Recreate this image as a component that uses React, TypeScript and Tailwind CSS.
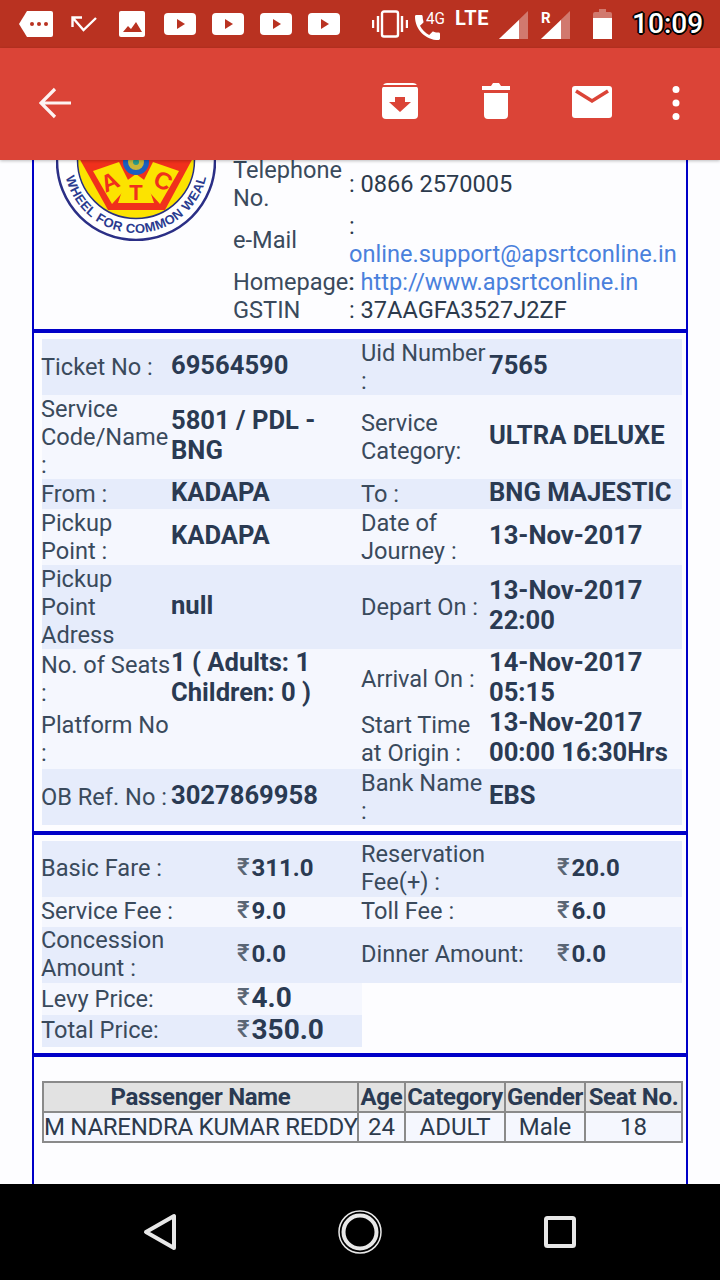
const labelText = "text-[23.6px] leading-[28px] text-[#3a4a5c] whitespace-pre";
const valueText = "text-[25.6px] leading-[30px] font-bold text-[#2a3a52] whitespace-pre";

type Row = { a: string; b: string; c: string; d: string; h: string; bg: string };

const ticketRows: Row[] = [
  { a: "Ticket No :", b: "69564590", c: "Uid Number\n:", d: "7565", h: "h-[56px]", bg: "bg-[#e6ecfb]" },
  { a: "Service\nCode/Name\n:", b: "5801 / PDL -\nBNG", c: "Service\nCategory:", d: "ULTRA DELUXE", h: "h-[84px]", bg: "bg-[#f5f7fe]" },
  { a: "From :", b: "KADAPA", c: "To :", d: "BNG MAJESTIC", h: "h-[30px]", bg: "bg-[#e6ecfb]" },
  { a: "Pickup\nPoint :", b: "KADAPA", c: "Date of\nJourney :", d: "13-Nov-2017", h: "h-[56px]", bg: "bg-[#f5f7fe]" },
  { a: "Pickup\nPoint\nAdress", b: "null", c: "Depart On :", d: "13-Nov-2017\n22:00", h: "h-[84px]", bg: "bg-[#e6ecfb]" },
  { a: "No. of Seats\n:", b: "1 ( Adults: 1\nChildren: 0 )", c: "Arrival On :", d: "14-Nov-2017\n05:15", h: "h-[60px]", bg: "bg-[#f5f7fe]" },
  { a: "Platform No\n:", b: "", c: "Start Time\nat Origin :", d: "13-Nov-2017\n00:00 16:30Hrs", h: "h-[60px]", bg: "bg-[#f5f7fe]" },
  { a: "OB Ref. No :", b: "3027869958", c: "Bank Name\n:", d: "EBS", h: "h-[56px]", bg: "bg-[#e6ecfb]" },
];

const fareRows = [
  { a: "Basic Fare :", b: "311.0", c: "Reservation\nFee(+) :", d: "20.0", h: "h-[56px]", bg: "bg-[#e6ecfb]" },
  { a: "Service Fee :", b: "9.0", c: "Toll Fee :", d: "6.0", h: "h-[30px]", bg: "bg-[#f5f7fe]" },
  { a: "Concession\nAmount :", b: "0.0", c: "Dinner Amount:", d: "0.0", h: "h-[56px]", bg: "bg-[#e6ecfb]" },
];

function Cell({ text, kind, lift }: { text: string; kind: "label" | "value"; lift?: boolean }) {
  return (
    <div className={`flex items-center ${kind === "label" ? `-ml-[1px] ${labelText}` : valueText}`}>
      <span className={kind === "value" ? "relative -top-[2px]" : lift ? "relative -top-[1px]" : ""}>{text}</span>
    </div>
  );
}

function Money({ value, big }: { value: string; big?: boolean }) {
  return (
    <div className="flex items-center whitespace-nowrap">
      <span className="text-[24px] leading-[30px] font-medium text-[#5a6675] mr-[2px] relative -top-[2px]">₹</span>
      <span className={`${big ? "text-[28px]" : "text-[24px]"} leading-[30px] font-bold text-[#2a3a52] relative -top-[1px]`}>{value}</span>
    </div>
  );
}

function PlayIcon() {
  return (
    <svg width="32" height="22" viewBox="0 0 32 22">
      <rect width="32" height="22" rx="4" fill="#fff" />
      <path d="M13 6l8 5-8 5z" fill="#b93221" />
    </svg>
  );
}

function StatusBar() {
  return (
    <div className="relative flex h-[48px] shrink-0 items-center bg-[#b93221] pl-[19px] text-white">
      <svg width="34" height="26" viewBox="0 0 34 26">
        <path d="M8 0h24a2 2 0 0 1 2 2v22a2 2 0 0 1-2 2H8L0 13z" fill="#fff" />
        <circle cx="13" cy="13" r="2" fill="#b93221" />
        <circle cx="20" cy="13" r="2" fill="#b93221" />
        <circle cx="27" cy="13" r="2" fill="#b93221" />
      </svg>
      <svg className="ml-[18px]" width="26" height="16" viewBox="0 0 26 16">
        <path d="M1.500 11V1.500H11M2 2l10.500 12L25 2" fill="none" stroke="#fff" strokeWidth="2.400" />
      </svg>
      <svg className="ml-[22px]" width="26" height="26" viewBox="0 0 26 26">
        <rect width="26" height="26" rx="2" fill="#fff" />
        <path d="M4 21l5-6 3 3 5-7 6 10z" fill="#b93221" />
      </svg>
      <div className="ml-[19px] flex gap-[16px]">
        <PlayIcon />
        <PlayIcon />
        <PlayIcon />
        <PlayIcon />
      </div>
      <svg className="ml-[32px]" width="36" height="28" viewBox="0 0 36 28">
        <rect x="10" y="1.500" width="16" height="25" rx="2" fill="none" stroke="#fff" strokeWidth="2.400" />
        <path d="M1 10v8M6 6v16M30 6v16M35 10v8" stroke="#fff" strokeWidth="2.400" />
      </svg>
      <div className="relative ml-[7px] h-[30px] w-[33px] self-start mt-[10px]">
        <svg className="absolute left-0 top-[5px]" width="25" height="25" viewBox="3 3 18 18">
          <path
            d="M6.600 10.800c1.400 2.800 3.800 5.100 6.600 6.600l2.200-2.200c.3-.3.700-.4 1-.2 1.100.4 2.300.6 3.600.6.600 0 1 .4 1 1V20c0 .6-.4 1-1 1C10.600 21 3 13.400 3 4c0-.6.4-1 1-1h3.500c.6 0 1 .4 1 1 0 1.300.2 2.500.6 3.600.1.300 0 .7-.2 1z"
            fill="#fff"
          />
        </svg>
        <span className="absolute left-[11px] -top-[2px] text-[17px] leading-[20px] text-white scale-x-90 origin-left">4G</span>
      </div>
      <span className="ml-[7px] text-[20px] leading-[20px] font-bold tracking-[0.6px] self-start mt-[8px]">LTE</span>
      <svg className="ml-[10px] mt-[2px]" width="29" height="28" viewBox="0 0 29 28">
        <path d="M0 28L29 0v28z" fill="#fff" fillOpacity="0.35" />
        <path d="M0 28L20 9v19z" fill="#fff" />
      </svg>
      <div className="relative ml-[13px] mt-[2px] h-[28px] w-[29px]">
        <svg width="29" height="28" viewBox="0 0 29 28">
          <path d="M0 28L29 0v28z" fill="#fff" fillOpacity="0.35" />
          <path d="M0 28L20 9v19z" fill="#fff" />
        </svg>
        <span className="absolute left-0 -top-[1px] text-[15px] leading-[16px] font-bold text-white">R</span>
      </div>
      <svg className="ml-[23px]" width="19" height="30" viewBox="0 0 19 30">
        <path d="M6 0h7v3h4a2 2 0 0 1 2 2v25H0V5a2 2 0 0 1 2-2h4z" fill="#fff" fillOpacity="0.35" />
        <path d="M0 9h19v21H0z" fill="#fff" />
      </svg>
      <span className="ml-[20px] text-[28px] leading-[32px] font-medium text-white [text-shadow:-1px_-1px_0_#000,1px_-1px_0_#000,-1px_1px_0_#000,1px_1px_0_#000,0_2px_0_#000,2px_0_0_#000,-2px_0_0_#000,0_-2px_0_#000]">
        10:09
      </span>
    </div>
  );
}

function Toolbar() {
  return (
    <div className="relative z-10 flex h-[112px] shrink-0 items-center bg-[#db4437] shadow-[0_1px_3px_rgba(0,0,0,0.25)]">
      <svg className="ml-[39px] -mt-[2px]" width="32" height="32" viewBox="0 0 32 32">
        <path d="M32 16H3M16 2L2 16l14 14" fill="none" stroke="#fdf3f2" strokeWidth="3.200" />
      </svg>
      <svg className="ml-[311px] -mt-[6px]" width="36" height="36" viewBox="0 0 36 36">
        <path d="M5 0h26a5 5 0 0 1 4 2H1a5 5 0 0 1 4-2z" fill="#fff" />
        <path d="M0 5.500a3 3 0 0 1 1-1.500h34a3 3 0 0 1 1 1.500V32a4 4 0 0 1-4 4H4a4 4 0 0 1-4-4z" fill="#fff" />
        <path d="M13 14h10v5h6L18 29 7 19h6z" fill="#db4437" />
      </svg>
      <svg className="ml-[64px] -mt-[6px]" width="28" height="36" viewBox="0 0 28 36">
        <path d="M0 3h9l2-3h6l2 3h9v4H0zM2 10h24v22a4 4 0 0 1-4 4H6a4 4 0 0 1-4-4z" fill="#fff" />
      </svg>
      <svg className="ml-[62px] -mt-[4px]" width="40" height="32" viewBox="0 0 40 32">
        <rect width="40" height="32" rx="3" fill="#fff" />
        <path d="M4 5l16 10L36 5" fill="none" stroke="#db4437" strokeWidth="3.600" />
      </svg>
      <svg className="ml-[60px] -mt-[2px]" width="8" height="34" viewBox="0 0 8 34">
        <circle cx="4" cy="3.500" r="3.500" fill="#fff" />
        <circle cx="4" cy="17" r="3.500" fill="#fff" />
        <circle cx="4" cy="30.500" r="3.500" fill="#fff" />
      </svg>
    </div>
  );
}

function Logo() {
  return (
    <svg width="160" height="85" viewBox="56 156 160 85" className="block">
      <defs>
        <path id="logo-band" d="M64 161 A72 72 0 0 0 208 161" />
      </defs>
      <circle cx="136" cy="161" r="79" fill="#fff" stroke="#2b2f86" strokeWidth="2.500" />
      <circle cx="136" cy="160" r="58.500" fill="#fce300" stroke="#27307f" strokeWidth="1.500" />
      {/* red star frame */}
      <path d="M78 156H194L165 210H108Z" fill="#f0301c" />
      <path d="M93 171L119 162L130 184L112 204Z" fill="#fce300" />
      <path d="M179 171L153 162L142 184L160 204Z" fill="#fce300" />
      <path d="M136 174L147 182L154 203H118L125 182Z" fill="#fce300" />
      <circle cx="136" cy="162" r="10.500" fill="#c9b53a" stroke="#1b5fc0" strokeWidth="5" />
      <circle cx="136" cy="162" r="3" fill="#2a9a8a" />
      <text x="110" y="190" fontSize="24" fontWeight="700" fill="#f0301c" fontFamily="'Liberation Sans',sans-serif" textAnchor="middle" transform="rotate(-25 110 182)">A</text>
      <text x="136" y="200" fontSize="22" fontWeight="700" fill="#f0301c" fontFamily="'Liberation Sans',sans-serif" textAnchor="middle">T</text>
      <text x="163" y="189" fontSize="24" fontWeight="700" fill="#f0301c" fontFamily="'Liberation Sans',sans-serif" textAnchor="middle" transform="rotate(25 163 181)">C</text>
      <text fontSize="13" fontWeight="700" fill="#2a3b8f" fontFamily="'Liberation Sans',sans-serif" textAnchor="middle" textLength="193">
        <textPath href="#logo-band" startOffset="50%">WHEEL FOR COMMON WEAL</textPath>
      </text>
    </svg>
  );
}

function HeaderBlock() {
  const rowLabel = "flex items-center text-[23.6px] leading-[28px] text-[#3a4a5c]";
  const rowValue = "flex flex-col justify-center text-[23.6px] leading-[28px] text-[#2c3a4c] whitespace-nowrap";
  return (
    <div className="-mt-[4px] flex h-[173px] pl-[22px] pt-0">
      <div className="w-[177px] shrink-0">
        <Logo />
      </div>
      <div className="grid grid-cols-[116px_1fr] grid-rows-[56px_56px_28px_28px]">
        <div className={rowLabel}>Telephone<br />No.</div>
        <div className={rowValue}>: 0866 2570005</div>
        <div className={rowLabel}>e-Mail</div>
        <div className={rowValue}>
          <span>:</span>
          <span className="text-[#4a80dc]">online.support@apsrtconline.in</span>
        </div>
        <div className={rowLabel}>Homepage:</div>
        <div className={rowValue}>
          <span>: <span className="text-[#4a80dc]">http://www.apsrtconline.in</span></span>
        </div>
        <div className={rowLabel}>GSTIN</div>
        <div className={rowValue}>: 37AAGFA3527J2ZF</div>
      </div>
    </div>
  );
}

function TicketBlock() {
  return (
    <div className="border-t-[4px] border-[#0000c8] pl-[8px] pr-[4px] py-[6px]">
      {ticketRows.map((r) => (
        <div key={r.a} className={`grid grid-cols-[129px_191px_127px_193px] ${r.h} ${r.bg}`}>
          <Cell text={r.a} kind="label" />
          <Cell text={r.b} kind="value" />
          <Cell text={r.c} kind="label" />
          <Cell text={r.d} kind="value" />
        </div>
      ))}
    </div>
  );
}

function FareBlock() {
  return (
    <div className="border-t-[4px] border-[#0000c8] pl-[8px] pr-[4px] py-[6px]">
      {fareRows.map((r) => (
        <div key={r.a} className={`grid grid-cols-[195px_125px_195px_125px] ${r.h} ${r.bg}`}>
          <Cell text={r.a} kind="label" lift />
          <Money value={r.b} />
          <Cell text={r.c} kind="label" lift />
          <Money value={r.d} />
        </div>
      ))}
      <div className="grid h-[32px] w-[320px] grid-cols-[195px_125px] bg-[#f5f7fe]">
        <Cell text="Levy Price:" kind="label" />
        <Money value="4.0" big />
      </div>
      <div className="grid h-[32px] w-[320px] grid-cols-[195px_125px] bg-[#e6ecfb]">
        <Cell text="Total Price:" kind="label" lift />
        <Money value="350.0" big />
      </div>
    </div>
  );
}

function PassengerTable() {
  const th = "border-2 border-[#8a8a8a] bg-[#e2e2e2] p-0 text-center text-[24px] leading-[26px] font-bold text-[#2a3a52] whitespace-nowrap tracking-[-0.3px]";
  const td = "border-2 border-[#8a8a8a] bg-[#f5f7fe] p-0 text-center text-[24px] leading-[27px] font-normal text-[#2c3a4c] whitespace-nowrap";
  return (
    <div className="border-t-[4px] border-[#0000c8] pl-[8px] pr-[4px] pt-[24px]">
      <table className="w-[639px] table-fixed border-collapse border-2 border-[#444]">
        <colgroup>
          <col className="w-[315px]" />
          <col className="w-[47px]" />
          <col className="w-[100px]" />
          <col className="w-[80px]" />
          <col className="w-[97px]" />
        </colgroup>
        <thead>
          <tr className="h-[30px]">
            <th className={th}>Passenger Name</th>
            <th className={th}>Age</th>
            <th className={th}>Category</th>
            <th className={th}>Gender</th>
            <th className={th}>Seat No.</th>
          </tr>
        </thead>
        <tbody>
          <tr className="h-[30px]">
            <td className={`${td} tracking-[-0.27px]`}>M NARENDRA KUMAR REDDY</td>
            <td className={td}>24</td>
            <td className={td}>ADULT</td>
            <td className={td}>Male</td>
            <td className={td}>18</td>
          </tr>
        </tbody>
      </table>
    </div>
  );
}

function NavBar() {
  return (
    <div className="flex h-[96px] shrink-0 items-center bg-black pl-[143px]">
      <svg width="34" height="38" viewBox="0 0 34 38">
        <path d="M31 3v32L3 19z" fill="none" stroke="#e8e8e8" strokeWidth="4" strokeLinejoin="round" />
      </svg>
      <svg className="ml-[161px]" width="44" height="44" viewBox="0 0 44 44">
        <circle cx="22" cy="22" r="21" fill="none" stroke="#e8e8e8" strokeWidth="1.500" />
        <circle cx="22" cy="22" r="16.500" fill="none" stroke="#e8e8e8" strokeWidth="4" />
      </svg>
      <svg className="ml-[162px]" width="32" height="32" viewBox="0 0 32 32">
        <rect x="2" y="2" width="28" height="28" rx="1.500" fill="none" stroke="#e8e8e8" strokeWidth="4" />
      </svg>
    </div>
  );
}

export default function App() {
  return (
    <main className="flex h-[1280px] w-[720px] flex-col overflow-hidden bg-white font-['Roboto',sans-serif]">
      <StatusBar />
      <Toolbar />
      <section className="min-h-0 flex-1 overflow-hidden bg-[#fdfdff]">
        <div className="mx-[32px] h-[1030px] border-x-2 border-[#0000c8]">
          <HeaderBlock />
          <TicketBlock />
          <FareBlock />
          <PassengerTable />
        </div>
      </section>
      <NavBar />
    </main>
  );
}
